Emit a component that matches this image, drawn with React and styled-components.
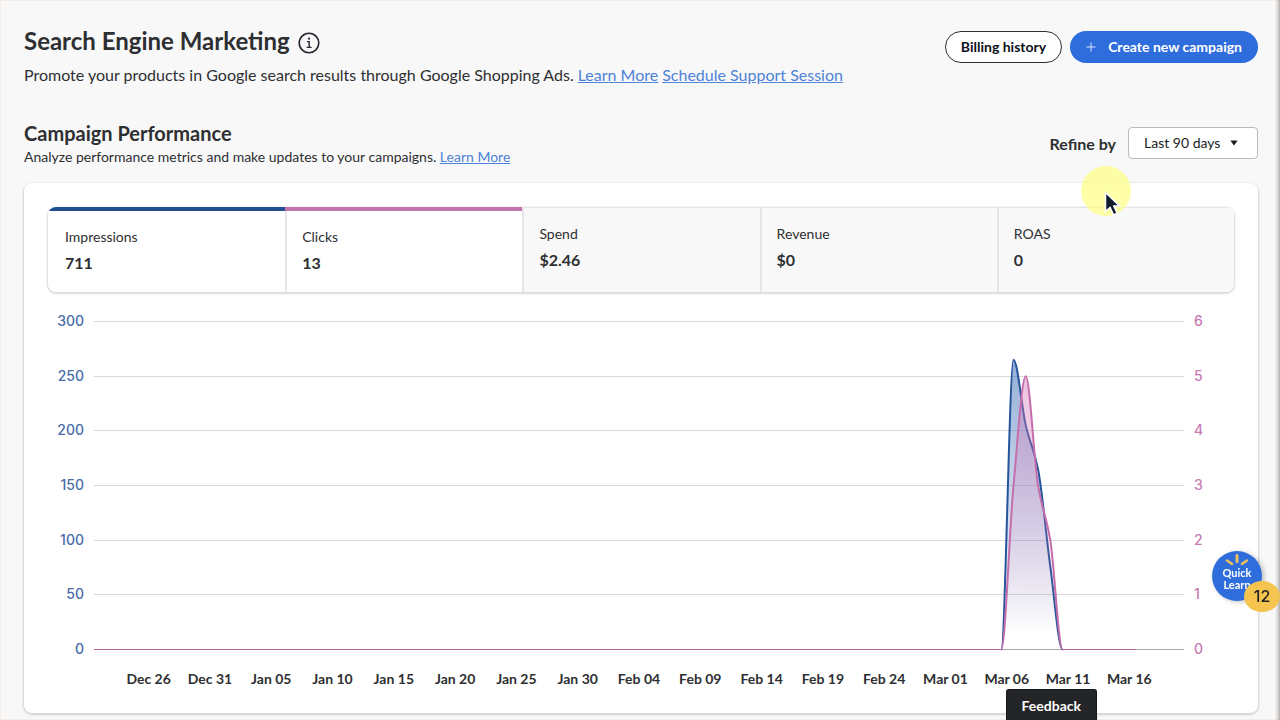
import React from "react";
import styled, { createGlobalStyle } from "styled-components";

const DAY_WIDTH = 12.26;
const PLOT_WIDTH = 1090;
const PLOT_HEIGHT = 328;
const BASELINE = PLOT_HEIGHT - 0.5;
const LAST_DAY = 85;

const metrics = [
  { name: "Impressions", value: "711", color: "#1f4e95" },
  { name: "Clicks", value: "13", color: "#c173ae" },
  { name: "Spend", value: "$2.46" },
  { name: "Revenue", value: "$0" },
  { name: "ROAS", value: "0" },
];

const leftTicks = [300, 250, 200, 150, 100, 50, 0];
const rightTicks = [6, 5, 4, 3, 2, 1, 0];

const dates = [
  "Dec 26",
  "Dec 31",
  "Jan 05",
  "Jan 10",
  "Jan 15",
  "Jan 20",
  "Jan 25",
  "Jan 30",
  "Feb 04",
  "Feb 09",
  "Feb 14",
  "Feb 19",
  "Feb 24",
  "Mar 01",
  "Mar 06",
  "Mar 11",
  "Mar 16",
];

// [day, value], every other day is zero
const impressions = [
  [74, 0],
  [75, 265],
  [76, 205],
  [77, 165],
  [78, 76],
  [79, 0],
];

const clicks = [
  [74, 0],
  [75, 3],
  [76, 5],
  [77, 3],
  [78, 2],
  [79, 0],
];

// monotone cubic through the points, so the curve never dips under zero
const curve = (series, max) => {
  const pts = series.map(([day, value]) => [
    day * DAY_WIDTH,
    BASELINE - (value / max) * PLOT_HEIGHT,
  ]);
  const slopes = pts
    .slice(1)
    .map((p, i) => (p[1] - pts[i][1]) / (p[0] - pts[i][0]));
  const tangents = pts.map((p, i) => {
    if (i === 0 || i === pts.length - 1) return 0;
    const a = slopes[i - 1];
    const b = slopes[i];
    return a * b <= 0 ? 0 : (2 * a * b) / (a + b);
  });

  return pts.slice(1).reduce((d, p, i) => {
    const prev = pts[i];
    const h = (p[0] - prev[0]) / 3;
    return `${d} C${prev[0] + h},${prev[1] + h * tangents[i]} ${p[0] - h},${
      p[1] - h * tangents[i + 1]
    } ${p[0]},${p[1]}`;
  }, `M${pts[0][0]},${pts[0][1]}`);
};

const Chart = () => {
  const blue = curve(impressions, 300);
  const pink = curve(clicks, 6);

  return (
    <ChartGrid>
      <Axis $color="#4a6ca8" $align="right">
        {leftTicks.map((tick) => (
          <Tick key={tick}>{tick}</Tick>
        ))}
      </Axis>
      <Plot
        viewBox={`0 0 ${PLOT_WIDTH} ${PLOT_HEIGHT}`}
        preserveAspectRatio="none"
        role="img"
        aria-label="Impressions and clicks by day"
      >
        <defs>
          <linearGradient id="blueFill" x1="0" y1="0" x2="0" y2="1">
            <stop offset="0%" stopColor="#2a60b0" stopOpacity="0.5" />
            <stop offset="95%" stopColor="#2a60b0" stopOpacity="0" />
          </linearGradient>
          <linearGradient id="pinkFill" x1="0" y1="0" x2="0" y2="1">
            <stop offset="0%" stopColor="#d878b8" stopOpacity="0.45" />
            <stop offset="95%" stopColor="#d878b8" stopOpacity="0" />
          </linearGradient>
        </defs>
        {leftTicks.map((tick, i) => {
          const y = Math.round((i * PLOT_HEIGHT) / 6) - 0.5;
          return (
            <line
              key={tick}
              x1="0"
              x2={PLOT_WIDTH}
              y1={y}
              y2={y}
              stroke={tick === 0 ? "#a8a8aa" : "#d9d9d9"}
            />
          );
        })}
        <path d={blue} fill="url(#blueFill)" />
        <Line d={blue} stroke="#25549b" />
        <path d={pink} fill="url(#pinkFill)" />
        <Line d={pink} stroke="#c46fac" />
        {/* both series rest on zero outside the peak */}
        <path
          d={`M0,${BASELINE}H${74 * DAY_WIDTH}M${79 * DAY_WIDTH},${BASELINE}H${
            LAST_DAY * DAY_WIDTH
          }`}
          stroke="#b0668f"
        />
      </Plot>
      <Axis $color="#c77ab4" $align="left">
        {rightTicks.map((tick) => (
          <Tick key={tick}>{tick}</Tick>
        ))}
      </Axis>
      <Dates>
        {dates.map((date) => (
          <span key={date}>{date}</span>
        ))}
      </Dates>
    </ChartGrid>
  );
};

const App = () => {
  return (
    <>
      <GlobalStyle />
      <Page>
        <Header>
          <div>
            <TitleRow>
              <Title>Search Engine Marketing</Title>
              <InfoButton aria-label="About search engine marketing">
                <svg width="22" height="22" viewBox="0 0 22 22" fill="none">
                  <circle cx="11" cy="11" r="9.8" stroke="#22262e" strokeWidth="1.6" />
                  <circle cx="11" cy="6.7" r="1.1" fill="#22262e" />
                  <path d="M9 9.6h2.2v5.6M8.6 15.4h5" stroke="#22262e" strokeWidth="1.4" />
                </svg>
              </InfoButton>
            </TitleRow>
            <Intro>
              <span>
                Promote your products in Google search results through Google
                Shopping Ads.
              </span>
              <Link href="#learn">Learn More</Link>
              <Link href="#support">Schedule Support Session</Link>
            </Intro>
          </div>
          <Actions>
            <PillButton>Billing history</PillButton>
            <PillButton $primary>
              <svg width="10" height="10" viewBox="0 0 10 10" stroke="#dbe6fa">
                <path d="M5 0.5v9M0.5 5h9" />
              </svg>
              Create new campaign
            </PillButton>
          </Actions>
        </Header>

        <SectionHead>
          <div>
            <SectionTitle>Campaign Performance</SectionTitle>
            <SectionText>
              Analyze performance metrics and make updates to your campaigns.{" "}
              <Link href="#metrics">Learn More</Link>
            </SectionText>
          </div>
          <Refine>
            <RefineLabel htmlFor="range">Refine by</RefineLabel>
            <SelectBox>
              <Select id="range" defaultValue="90">
                <option value="90">Last 90 days</option>
                <option value="30">Last 30 days</option>
                <option value="7">Last 7 days</option>
              </Select>
              <Caret width="8" height="6" viewBox="0 0 8 6">
                <path d="M0.3 0.6h7.4L4 5.4z" fill="#1b1d22" />
              </Caret>
            </SelectBox>
          </Refine>
        </SectionHead>

        <Card>
          <Metrics>
            {metrics.map(({ name, value, color }) => (
              <Metric key={name} $color={color}>
                <MetricName>{name}</MetricName>
                <MetricValue>{value}</MetricValue>
              </Metric>
            ))}
          </Metrics>
          <Chart />
        </Card>
      </Page>

      <EdgeShade />
      <Feedback>Feedback</Feedback>
      <QuickLearn>
        <svg width="24" height="13" viewBox="0 0 24 13" stroke="#e9c063" strokeLinecap="round">
          <path d="M12 1.5v6" strokeWidth="3" />
          <path d="M2 6.5l5 3.3M22 6.5l-5 3.3" strokeWidth="2.6" />
        </svg>
        <span>Quick</span>
        <span>Learn</span>
        <Badge>12</Badge>
      </QuickLearn>
      <Pointer>
        <svg width="18" height="26" viewBox="0 0 18 26">
          <path
            d="M1.5 1.5v19l4.6-4 3.4 7.4 3.6-1.6-3.3-7.2h6z"
            fill="#0f1a2b"
            stroke="#fff"
            strokeWidth="1.5"
          />
        </svg>
      </Pointer>
    </>
  );
};

export default App;

const GlobalStyle = createGlobalStyle`
  * {
    box-sizing: border-box;
  }

  body {
    margin: 0;
    overflow: hidden;
    background: #f8f8f8;
    color: #2e2f32;
    font-family: Lato, "Liberation Sans", sans-serif;
  }

  button,
  select {
    font-family: inherit;
  }
`;

const Page = styled.main`
  padding: 25px 22px 7px 24px;
  box-shadow: inset 0 0 0 1px #f7ebe6;
`;

const Header = styled.header`
  display: flex;
  justify-content: space-between;
  align-items: flex-start;
`;

const TitleRow = styled.div`
  display: flex;
  align-items: center;
  gap: 8px;
`;

const Title = styled.h1`
  margin: 0;
  font-size: 24px;
  line-height: 32px;
`;

const InfoButton = styled.button`
  display: flex;
  padding: 3px 0 0;
  border: 0;
  background: none;
`;

const Intro = styled.p`
  display: flex;
  gap: 4px;
  margin: 6px 0 0;
  font-size: 16px;
  line-height: 24px;
`;

const Link = styled.a`
  color: #4d82d6;
  text-decoration: underline;
`;

const Actions = styled.div`
  display: flex;
  gap: 8px;
  padding-top: 6px;
`;

const PillButton = styled.button`
  display: flex;
  align-items: center;
  gap: 12px;
  height: 32px;
  padding: 0 ${({ $primary }) => ($primary ? "16px" : "15px")} 1px;
  border: ${({ $primary }) => ($primary ? "0" : "1px solid #2e2f32")};
  border-radius: 16px;
  background: ${({ $primary }) => ($primary ? "#2e6ddb" : "#fff")};
  color: ${({ $primary }) => ($primary ? "#fff" : "#0c1220")};
  font-size: 14px;
  font-weight: bold;
`;

const SectionHead = styled.div`
  display: flex;
  justify-content: space-between;
  align-items: flex-end;
  padding: 34px 0 14px;
`;

const SectionTitle = styled.h2`
  margin: 0;
  font-size: 20px;
  line-height: 24px;
`;

const SectionText = styled.p`
  margin: 0;
  font-size: 14px;
  line-height: 24px;
`;

const Refine = styled.div`
  display: flex;
  align-items: center;
  gap: 12px;
  padding-bottom: 10px;
`;

const RefineLabel = styled.label`
  font-size: 16px;
  font-weight: bold;
`;

const SelectBox = styled.div`
  position: relative;
  width: 130px;
`;

const Select = styled.select`
  width: 100%;
  height: 32px;
  padding: 0 16px 1px 15px;
  border: 1px solid #babbbe;
  border-radius: 4px;
  background: #fff;
  color: #1b1d22;
  font-size: 14px;
  appearance: none;
`;

const Caret = styled.svg`
  position: absolute;
  top: 13px;
  right: 20px;
  pointer-events: none;
`;

const Card = styled.section`
  padding: 24px 24px 22px;
  border-radius: 8px;
  background: #fff;
  box-shadow: 0 1px 2px 1px rgba(0, 0, 0, 0.15);
`;

const Metrics = styled.div`
  display: grid;
  grid-template-columns: repeat(5, 1fr);
  overflow: hidden;
  height: 85px;
  border-radius: 8px;
  box-shadow: 0 1px 2px 1px rgba(0, 0, 0, 0.15);
`;

const Metric = styled.div`
  padding: 14px 17px;
  border-top: ${({ $color }) => ($color ? `4px solid ${$color}` : "1px solid #e6e6e7")};
  background: ${({ $color }) => ($color ? "#fff" : "#f8f8f8")};

  & + & {
    box-shadow: inset 2px 0 #e6e6e7;
  }
`;

const MetricName = styled.div`
  font-size: 14px;
  line-height: 24px;
`;

const MetricValue = styled.div`
  font-size: 16px;
  font-weight: bold;
  line-height: 28px;
`;

const ChartGrid = styled.div`
  display: grid;
  grid-template-columns: 36px 1fr 36px;
  column-gap: 10px;
  row-gap: 10px;
  padding: 21px 4px 0 0;
`;

const Axis = styled.div`
  display: flex;
  flex-direction: column;
  justify-content: space-between;
  height: 344px;
  color: ${({ $color }) => $color};
  font-family: Inter, "Liberation Sans", sans-serif;
  font-size: 14px;
  font-weight: 500;
  text-align: ${({ $align }) => $align};
`;

const Tick = styled.div`
  line-height: 16px;
`;

const Plot = styled.svg`
  width: 100%;
  height: 328px;
  margin-top: 9px;
  overflow: visible;
`;

const Line = styled.path`
  fill: none;
  stroke-width: 2px;
  stroke-linejoin: round;
  vector-effect: non-scaling-stroke;
`;

const Dates = styled.div`
  display: grid;
  grid-column: 2;
  grid-template-columns: repeat(17, 1fr);
  padding: 0 24px;
  font-size: 14px;
  font-weight: bold;
  line-height: 24px;
  text-align: center;
  white-space: nowrap;
`;

const EdgeShade = styled.div`
  position: fixed;
  top: 0;
  right: 0;
  bottom: 0;
  width: 5px;
  background: linear-gradient(to right, rgba(0, 0, 0, 0), rgba(0, 0, 0, 0.25));
`;

const Feedback = styled.button`
  position: fixed;
  right: 183px;
  bottom: 0;
  height: 31px;
  padding: 0 15px;
  border: 1px solid #14171c;
  border-bottom: 0;
  border-radius: 3px 3px 0 0;
  background: #242527;
  color: #fff;
  font-size: 14px;
  font-weight: bold;
`;

const QuickLearn = styled.button`
  position: fixed;
  right: 18px;
  bottom: 119px;
  display: flex;
  flex-direction: column;
  align-items: center;
  width: 50px;
  height: 50px;
  padding: 3px 0 0;
  border: 0;
  border-radius: 50%;
  background: #2e6ddb;
  box-shadow: 2px 1px 5px rgba(0, 0, 0, 0.25);
  color: #fff;
  font-size: 11px;
  font-weight: bold;
  line-height: 12px;
`;

const Badge = styled.span`
  position: absolute;
  top: 30px;
  left: 32px;
  width: 36px;
  height: 31px;
  border-radius: 50%;
  background: #f5c44e;
  color: #1f2023;
  font-family: Inter, "Liberation Sans", sans-serif;
  font-size: 16px;
  font-weight: 500;
  line-height: 31px;
`;

const Pointer = styled.div`
  position: absolute;
  top: 166px;
  right: 149px;
  width: 50px;
  height: 50px;
  padding: 25px 0 0 23px;
  border-radius: 50%;
  background: rgba(255, 255, 120, 0.65);
  pointer-events: none;
`;
